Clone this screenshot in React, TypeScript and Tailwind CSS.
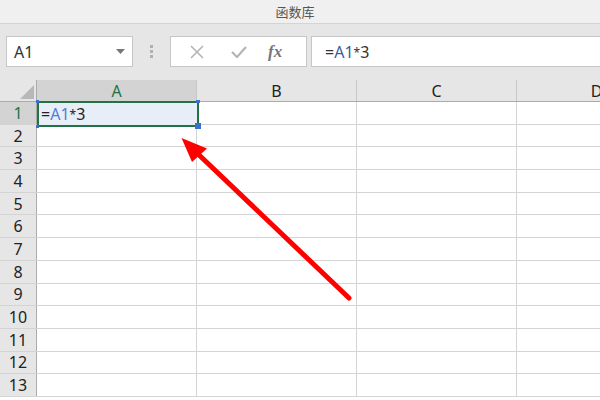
import React from "react";

const cols = ["A", "B", "C", "D"];
const rows = Array.from({ length: 13 }, (_, i) => i + 1);

export default function App() {
  return (
    <div
      className="relative w-[600px] h-[400px] overflow-hidden bg-white flex flex-col"
      style={{ fontFamily: '"Noto Sans", "Noto Sans CJK SC", sans-serif' }}
    >
      {/* Title bar */}
      <div className="h-[24px] shrink-0 bg-[#f0f0f0] border-b border-[#d4d4d4] flex items-center justify-center">
        <span
          className="text-[13px] text-[#555] leading-none pl-[-10px] mr-[10px]"
          style={{ fontFamily: '"Noto Sans CJK SC", sans-serif' }}
        >
          函数库
        </span>
      </div>

      {/* Formula bar */}
      <div className="h-[56px] shrink-0 bg-[#e6e6e6] flex items-start pt-[12px] pl-[6px]">
        <div className="w-[127px] h-[31px] bg-white border border-[#c6c6c6] flex items-center justify-between pl-[7px] pr-[7px]">
          <span className="text-[16px] text-[#333] leading-none">A1</span>
          <svg width="9" height="5" viewBox="0 0 9 5">
            <path d="M0 0 L9 0 L4.5 5 Z" fill="#777" />
          </svg>
        </div>
        <div className="w-[37px] h-[31px] flex flex-col items-center justify-center gap-[2px]">
          <div className="w-[3px] h-[3px] bg-[#b0b0b0]" />
          <div className="w-[3px] h-[3px] bg-[#b0b0b0]" />
          <div className="w-[3px] h-[3px] bg-[#b0b0b0]" />
        </div>
        <div className="w-[137px] h-[31px] bg-white border border-[#c6c6c6] flex items-center">
          <svg width="14" height="14" viewBox="0 0 14 14" className="ml-[19px]">
            <path d="M1 1 L13 13 M13 1 L1 13" stroke="#b5b5b5" strokeWidth="1.6" />
          </svg>
          <svg width="16" height="12" viewBox="0 0 16 12" className="ml-[27px]">
            <path d="M1 6 L6 11 L15 1" stroke="#b5b5b5" strokeWidth="2.2" fill="none" />
          </svg>
          <span
            className="ml-[21px] text-[17px] italic font-bold text-[#777] leading-none"
            style={{ fontFamily: '"Liberation Serif", serif' }}
          >
            fx
          </span>
        </div>
        <div className="ml-[4px] flex-1 h-[31px] bg-white border border-[#c6c6c6] border-r-0 flex items-center pl-[13px]">
          <span className="text-[16px] text-[#333] leading-none">
            =<span className="text-[#3b5e9c]">A1</span>
            <span className="text-[12px] relative top-[-1px]">*</span>3
          </span>
        </div>
      </div>

      {/* Grid */}
      <div className="flex-1 flex flex-col">
        {/* Column headers */}
        <div className="h-[22px] shrink-0 flex bg-[#e6e6e6] border-b border-[#ababab]">
          <div className="w-[37px] shrink-0 relative border-r border-[#ababab]">
            <svg width="14" height="14" viewBox="0 0 14 14" className="absolute right-[2px] bottom-[2px]">
              <path d="M14 0 L14 14 L0 14 Z" fill="#b8b8b8" />
            </svg>
          </div>
          {cols.map((c, i) => (
            <div
              key={c}
              className={
                "w-[160px] shrink-0 flex items-center justify-center text-[16px] leading-none border-r border-[#c8c8c8] " +
                (i === 0 ? "bg-[#d3d3d3] text-[#217346]" : "text-[#222]")
              }
            >
              {c}
            </div>
          ))}
        </div>
        {/* Rows */}
        {rows.map((r) => (
          <div key={r} className="h-[22.7px] shrink-0 flex border-b border-[#d4d4d4]">
            <div
              className={
                "w-[37px] shrink-0 flex items-center justify-center text-[16px] leading-none border-r border-[#ababab] " +
                (r === 1 ? "bg-[#d3d3d3] text-[#217346]" : "bg-[#e6e6e6] text-[#222]")
              }
            >
              {r}
            </div>
            {cols.map((c) => (
              <div key={c} className="w-[160px] shrink-0 border-r border-[#d4d4d4]" />
            ))}
          </div>
        ))}
      </div>

      {/* Selected cell A1 */}
      <div className="absolute left-[37px] top-[101px] w-[162px] h-[26px] border-2 border-[#217346] bg-[#e8eef8] flex items-center pl-[2px]">
        <span className="text-[16px] leading-none text-[#222]">
          =<span className="text-[#4f7fd3]">A1</span>
          <span className="text-[12px] relative top-[-1px]">*</span>3
        </span>
        <div className="absolute left-[-3px] top-[-3px] w-[3px] h-[3px] bg-[#3a6fd0]" />
        <div className="absolute left-[-3px] bottom-[-3px] w-[3px] h-[3px] bg-[#3a6fd0]" />
        <div className="absolute right-[-3px] top-[-3px] w-[4px] h-[3px] bg-[#3a6fd0]" />
        <div className="absolute right-[-4px] bottom-[-4px] w-[6px] h-[6px] bg-[#3a6fd0]" />
      </div>

      {/* Arrow */}
      <svg className="absolute left-0 top-0 pointer-events-none" width="600" height="400" viewBox="0 0 600 400">
        <line x1="349" y1="298" x2="198" y2="154" stroke="#ff0000" strokeWidth="5" strokeLinecap="round" />
        <path d="M181.5 138 L207 148.5 L192 162 Z" fill="#ff0000" />
      </svg>
    </div>
  );
}
